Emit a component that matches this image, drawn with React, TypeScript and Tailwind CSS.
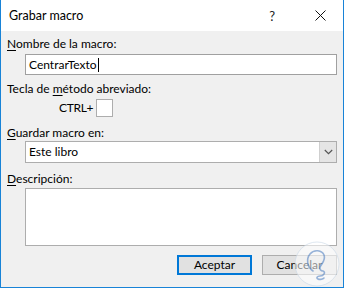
import React from "react";

const font = { fontFamily: 'Lato, "Noto Sans", sans-serif' };

export default function App() {
  return (
    <div
      className="w-[344px] h-[288px] flex flex-col border-l border-r border-b border-[#1883d7] bg-[#f0f0f0] text-[12px] leading-4 text-black overflow-hidden relative"
      style={font}
    >
      {/* Title bar */}
      <div className="h-[31px] bg-white flex items-center shrink-0">
        <span className="ml-[8px] text-[12.5px] text-[#000]">Grabar macro</span>
        <span className="ml-auto mr-[40px] text-[13px] text-[#222]">?</span>
        <svg width="11" height="11" viewBox="0 0 11 11" className="mr-[17px]">
          <path d="M0.5 0.5 L10.5 10.5 M10.5 0.5 L0.5 10.5" stroke="#111" strokeWidth="1" />
        </svg>
      </div>

      <div className="flex flex-col pl-[6px] pr-[6px]">
        <div className="mt-[5px] h-4">
          <span className="underline underline-offset-2">N</span>ombre de la macro:
        </div>
        <div className="mt-[2px] ml-[18px] h-[21px] bg-white border border-[#a0a0a0] flex items-center pl-[3px]">
          <span>CentrarTexto</span>
          <span className="w-px h-[14px] bg-black ml-[1px]" />
        </div>

        <div className="mt-[6px] h-4">
          Tecla de <span className="underline underline-offset-2">m</span>étodo abreviado:
        </div>
        <div className="mt-[2px] flex items-center h-[18px]">
          <span className="ml-[52px] tracking-[-0.3px]">CTRL+</span>
          <div className="ml-[3px] w-[17px] h-[18px] bg-white border border-[#adadad]" />
        </div>

        <div className="mt-[8px] h-4">
          <span className="underline underline-offset-2">G</span>uardar macro en:
        </div>
        <div className="ml-[18px] h-[22px] bg-white border border-[#adadad] flex items-center">
          <span className="pl-[3px]">Este libro</span>
          <div className="ml-auto w-[17px] h-full bg-[#e5e5e5] border-l border-[#cfcfcf] flex items-center justify-center">
            <svg width="9" height="6" viewBox="0 0 9 6">
              <path d="M0.8 1 L4.5 4.6 L8.2 1" fill="none" stroke="#555" strokeWidth="1.2" />
            </svg>
          </div>
        </div>

        <div className="mt-[8px] h-4">
          <span className="underline underline-offset-2">D</span>escripción:
        </div>
        <div className="mt-[1px] ml-[18px] h-[58px] bg-white border border-[#adadad]" />

        <div className="mt-[9px] flex justify-end gap-[10px]">
          <div className="w-[75px] h-[20px] bg-[#e1e1e1] border-2 border-[#0078d7] flex items-center justify-center">
            Aceptar
          </div>
          <div className="w-[75px] h-[20px] bg-[#e1e1e1] border border-[#adadad] flex items-center justify-center">
            Cancelar
          </div>
        </div>
      </div>

      {/* watermark */}
      <svg
        width="46"
        height="46"
        viewBox="0 0 46 46"
        className="absolute left-[293px] top-[241px] pointer-events-none"
      >
        <circle cx="23" cy="23" r="22" fill="rgba(255,255,255,0.55)" stroke="rgba(200,215,230,0.6)" strokeWidth="1" />
        <path
          d="M19 30 C13 26 12 18 16 13 C20 8 28 9 30 14 C32 19 28 22 26 26 C25 28 27 30 29 30 C32 31 30 35 26 35 C23 35 22 37 24 38 C26 39 29 38 30 37"
          fill="none"
          stroke="rgba(70,120,190,0.55)"
          strokeWidth="1.6"
          strokeLinecap="round"
        />
      </svg>
    </div>
  );
}
